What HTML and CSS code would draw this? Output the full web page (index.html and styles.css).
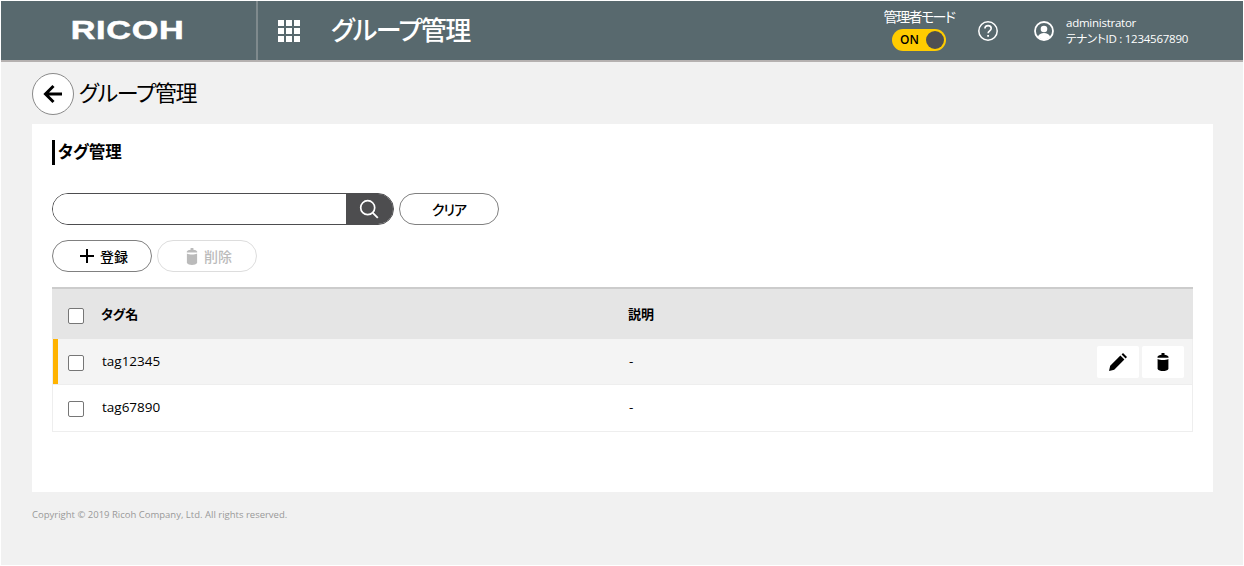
FILE: index.html
```html
<!DOCTYPE html>
<html lang="ja">
<head>
<meta charset="utf-8">
<title>グループ管理</title>
<link rel="stylesheet" href="styles.css">
</head>
<body>
<div class="page">
  <header class="topbar">
    <div class="brand"><span class="logo">RICOH</span></div>
    <div class="app-title">
      <svg class="grid-icon" width="22" height="22" viewBox="0 0 22 22" fill="#fff"><path d="M0 0h6v6H0zM8 0h6v6H8zM16 0h6v6h-6zM0 8h6v6H0zM8 8h6v6H8zM16 8h6v6h-6zM0 16h6v6H0zM8 16h6v6H8zM16 16h6v6h-6z"/></svg>
      <span class="app-name">グループ管理</span>
    </div>
    <div class="admin-mode">
      <span class="admin-label">管理者モード</span>
      <span class="toggle"><span class="toggle-text">ON</span><span class="toggle-knob"></span></span>
    </div>
    <svg class="help-icon" width="22" height="22" viewBox="0 0 22 22" fill="none" stroke="#fff"><circle cx="11" cy="11" r="9.2" stroke-width="1.5"/><path d="M7.9 8.6c0-1.8 1.4-3 3.2-3s3.1 1.1 3.1 2.8c0 2.400-3.100 2.400-3.100 4.900" stroke-width="1.600"/><path d="M11.100 15v1.800" stroke-width="1.800"/></svg>
    <svg class="user-icon" width="20" height="20" viewBox="0 0 20 20"><circle cx="10" cy="10" r="9" fill="none" stroke="#fff" stroke-width="1.800"/><circle cx="10" cy="8" r="3.300" fill="#fff"/><path d="M3.800 16c1-3 3.400-4 6.200-4s5.200 1 6.200 4c-1.600 1.600-3.800 2.500-6.200 2.500S5.400 17.600 3.800 16z" fill="#fff"/></svg>
    <div class="user-info">
      <span>administrator</span>
      <span>テナントID : 1234567890</span>
    </div>
  </header>

  <div class="page-head">
    <button class="back-btn" type="button" aria-label="戻る">
      <svg width="20" height="20" viewBox="0 0 20 20" fill="none" stroke="#000" stroke-width="3"><path d="M19 10H2.500M10.500 2l-8 8 8 8"/></svg>
    </button>
    <h1 class="page-title">グループ管理</h1>
  </div>

  <main class="panel">
    <h2 class="section-title">タグ管理</h2>
    <div class="search-row">
      <div class="search-box">
        <input class="search-input" type="text" aria-label="検索">
        <span class="search-btn">
          <svg width="20" height="20" viewBox="0 0 20 20" fill="none" stroke="#fff"><circle cx="8.700" cy="8.700" r="7" stroke-width="1.700"/><path d="M13.800 13.800l5 5" stroke-width="1.900"/></svg>
        </span>
      </div>
      <button class="pill pill-clear" type="button">クリア</button>
    </div>
    <div class="action-row">
      <button class="pill pill-add" type="button">
        <svg width="14" height="14" viewBox="0 0 14 14" fill="#000"><path d="M6 0h2v6h6v2H8v6H6V8H0V6h6z"/></svg>
        登録
      </button>
      <button class="pill pill-disabled" type="button">
        <svg width="12" height="17" viewBox="0 0 12 18" fill="#bbb"><path d="M4.500 0h3v1.800c2 .2 3.500.9 4 1.900v1H.500v-1c.5-1 2-1.700 4-1.900zM.6 5.900c1.400.7 3.300 1 5.400 1s4-.3 5.400-1v10c-.8 1.300-3 2.100-5.400 2.100s-4.600-.8-5.400-2.100z"/></svg>
        削除
      </button>
    </div>
    <div class="table">
      <div class="tr th">
        <span class="check"></span>
        <span class="col-name">タグ名</span>
        <span class="col-desc">説明</span>
      </div>
      <div class="tr row row-active">
        <span class="check"></span>
        <span class="col-name">tag12345</span>
        <span class="col-desc">-</span>
        <span class="row-actions">
          <span class="icon-btn">
            <svg width="18" height="18" viewBox="0 0 18 18" fill="#000"><path d="M0 18l1.200-5.200L11.400 2.600l4 4L5.200 16.800zM12.600 1.400L14 0l4 4-1.400 1.400z"/></svg>
          </span>
          <span class="icon-btn">
            <svg width="12" height="18" viewBox="0 0 12 18" fill="#000"><path d="M4.500 0h3v1.800c2 .2 3.500.9 4 1.900v1H.500v-1c.5-1 2-1.700 4-1.900zM.6 5.900c1.400.7 3.300 1 5.400 1s4-.3 5.400-1v10c-.8 1.300-3 2.100-5.400 2.100s-4.600-.8-5.400-2.100z"/></svg>
          </span>
        </span>
      </div>
      <div class="tr row row-last">
        <span class="check"></span>
        <span class="col-name">tag67890</span>
        <span class="col-desc">-</span>
      </div>
    </div>
  </main>

  <footer class="copyright">Copyright © 2019 Ricoh Company, Ltd. All rights reserved.</footer>
</div>
</body>
</html>
```

FILE: styles.css
```css
* { box-sizing: border-box; }
html, body { margin: 0; padding: 0; }
body {
  background: #fff;
  height: 566px;
  overflow: hidden;
  padding: 1px;
  font-family: "Open Sans", "Noto Sans CJK JP", sans-serif;
  font-feature-settings: "palt";
  color: #000;
}
.page { background: #f1f1f1; height: 564px; }

.topbar {
  display: flex;
  align-items: center;
  height: 61px;
  background: #58696e;
  border-bottom: 2px solid #b5b1b0;
  color: #fff;
}
.brand {
  width: 257px;
  height: 59px;
  border-right: 2px solid #7f8a8d;
  display: flex;
  align-items: center;
  justify-content: center;
  flex: none;
}
.logo {
  font-family: "Liberation Sans", sans-serif;
  font-weight: 700;
  font-size: 25px;
  letter-spacing: 0.5px;
  transform: scaleX(1.37);
  -webkit-text-stroke: 0.5px #fff;
  margin-right: 2px;
}
.app-title { display: flex; align-items: center; flex: 1; padding-left: 20px; }
.grid-icon { flex: none; }
.app-name { font-size: 26px; font-weight: 500; letter-spacing: -1.5px; margin-left: 31px; padding-bottom: 4px; }
.admin-mode {
  display: flex;
  flex-direction: column;
  align-items: center;
  width: 74px;
}
.admin-label { font-size: 14px; letter-spacing: -1.5px; line-height: 13px; white-space: nowrap; }
.toggle {
  width: 54px;
  height: 22px;
  border-radius: 11px;
  background: #ffcc00;
  display: flex;
  align-items: center;
  justify-content: space-between;
  padding: 0 2px 0 8px;
  margin-top: 6px;
}
.toggle-text { color: #000; font-size: 12px; font-weight: 600; line-height: 1; }
.toggle-knob { width: 18px; height: 18px; border-radius: 50%; background: #4f4f52; }
.help-icon { margin-left: 21px; flex: none; }
.user-icon { margin-left: 35px; flex: none; }
.user-info {
  display: flex;
  flex-direction: column;
  margin-left: 12px;
  width: 177px;
  font-size: 11.500px;
  letter-spacing: -0.25px;
  line-height: 16px;
}

.page-head { display: flex; align-items: center; padding: 11px 0 9px 31px; height: 62px; }
.back-btn {
  width: 42px;
  height: 42px;
  padding: 0;
  border: 1px solid #8a8a8a;
  border-radius: 50%;
  background: #fff;
  display: flex;
  align-items: center;
  justify-content: center;
}
.page-title { font-size: 22px; font-weight: 400; letter-spacing: -1.3px; margin: 0 0 0 5px; padding-bottom: 4px; height: 42px; line-height: 38px; }

.panel {
  margin: 0 30px 0 31px;
  height: 368px;
  background: #fff;
  padding: 16px 20px 0;
}
.section-title {
  margin: 0;
  height: 25px;
  border-left: 3px solid #000;
  padding-left: 3px;
  font-size: 16.500px;
  font-weight: 700;
  line-height: 23px;
}
.search-row { display: flex; gap: 5px; margin-top: 28px; }
.search-box {
  width: 342px;
  height: 32px;
  display: flex;
  border: 1px solid #4d4d4f;
  border-radius: 16px;
  overflow: hidden;
}
.search-input { flex: 1; min-width: 0; border: 0; outline: 0; background: #fff; }
.search-btn {
  width: 47px;
  background: #4d4d4f;
  display: flex;
  align-items: center;
  justify-content: center;
  padding-right: 2px;
}
.pill {
  width: 100px;
  height: 32px;
  padding: 0;
  border: 1px solid #808080;
  border-radius: 16px;
  background: #fff;
  color: #000;
  display: flex;
  align-items: center;
  justify-content: center;
  gap: 6px;
  font-family: inherit;
  font-feature-settings: "palt";
  font-size: 14px;
  font-weight: 500;
}
.pill-clear { letter-spacing: -1px; }
.pill-add { padding-left: 4px; }
.pill-disabled { border-color: #ddd; color: #bbb; padding-left: 4px; }
.action-row { display: flex; gap: 5px; margin-top: 15px; }

.table {
  margin-top: 15px;
  border-top: 2px solid #ccc;
  font-size: 13px;
}
.tr { display: flex; align-items: center; position: relative; }
.th { height: 50px; background: #e5e5e5; font-weight: 700; }
.row {
  height: 46px;
  border-left: 1px solid #eee;
  border-right: 1px solid #eee;
  border-bottom: 1px solid #eee;
  background: #fff;
  font-size: 13.500px;
}
.row-last { height: 47px; }
.row-active { background: #f4f4f4; }
.row-active::before {
  content: "";
  position: absolute;
  left: 0;
  top: 0;
  bottom: 0;
  width: 5px;
  background: #ffb300;
}
.check {
  width: 16px;
  height: 16px;
  margin: 4px 0 0 16px;
  border: 1px solid #767676;
  border-radius: 2px;
  background: #fff;
  flex: none;
}
.row .check { margin: 2px 0 0 15px; }
.col-name { margin-left: 17px; width: 527px; flex: none; padding-bottom: 2px; }
.row .col-name { margin-left: 18px; }
.col-desc { flex: 1; padding-bottom: 2px; }
.row-actions { display: flex; gap: 3px; margin-right: 8px; }
.icon-btn {
  width: 42px;
  height: 32px;
  background: #fff;
  border-radius: 2px;
  display: flex;
  align-items: center;
  justify-content: center;
}

.copyright {
  margin: 16px 0 0 31px;
  font-size: 9.500px;
  line-height: 14px;
  color: #999;
}
```
